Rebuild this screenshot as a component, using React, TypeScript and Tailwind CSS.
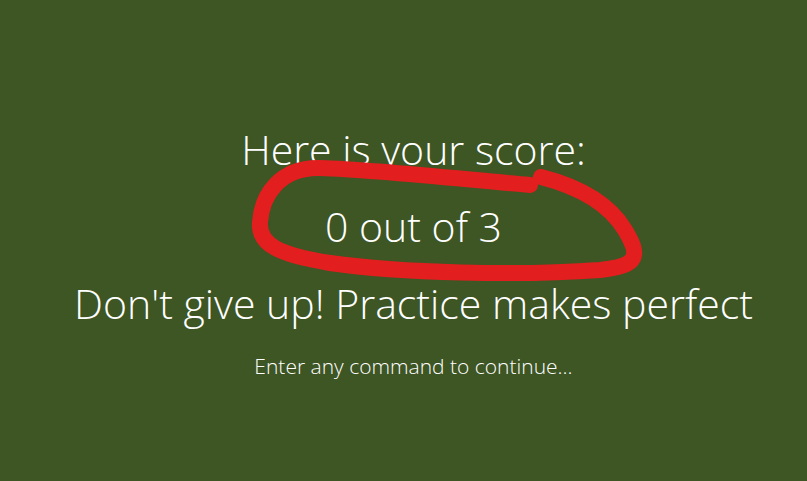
export default function App() {
  return (
    <div
      className="relative h-[481px] w-full overflow-hidden bg-[#3e5524] text-white"
      style={{ fontFamily: '"Open Sans", "Noto Sans", sans-serif' }}
    >
      <div className="flex flex-col items-center pt-[111px] pl-[20px] font-light">
        <p className="text-[41px] leading-[77px]">Here is your score:</p>
        <p className="text-[41px] leading-[77px]">0 out of 3</p>
        <p className="text-[41px] leading-[77px]">Don't give up! Practice makes perfect</p>
        <p className="mt-[8px] text-[21px] leading-[32px]">Enter any command to continue...</p>
      </div>
      <svg className="pointer-events-none absolute inset-0" width="807" height="481" viewBox="0 0 807 481">
        <path
          d="M 530 185 C 470 180, 380 170, 320 168 C 280 167, 262 195, 260 222 C 258 245, 280 255, 330 263 C 400 273, 520 276, 600 270 C 640 266, 640 255, 625 230 C 610 205, 580 187, 541 177"
          fill="none"
          stroke="#e31e1e"
          strokeWidth="16"
          strokeLinecap="round"
          strokeLinejoin="round"
        />
      </svg>
    </div>
  );
}
